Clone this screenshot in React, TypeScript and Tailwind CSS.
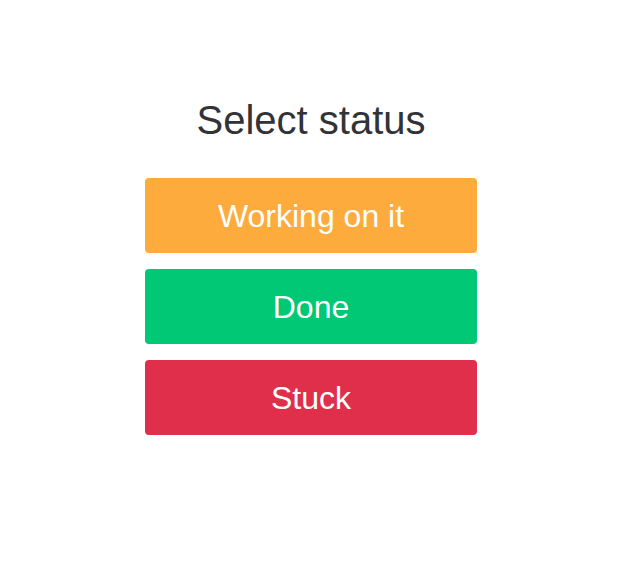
const statuses = [
  { label: 'Working on it', color: 'bg-[#fdab3d]' },
  { label: 'Done', color: 'bg-[#00c875]' },
  { label: 'Stuck', color: 'bg-[#df2f4a]' },
]

export default function App() {
  return (
    <div className="min-h-[583px] bg-white flex justify-center pr-[7px] pt-[96px] font-['Liberation_Sans',Arial,sans-serif]">
      <div className="w-[332px] flex flex-col">
        <h1 className="text-center text-[40px] leading-[48px] text-[#323338]">Select status</h1>
        <div className="mt-[34px] flex flex-col gap-4">
          {statuses.map((s) => (
            <button
              key={s.label}
              className={`${s.color} h-[75px] rounded-[4px] text-white text-[32px] flex items-center justify-center pt-px`}
            >
              {s.label}
            </button>
          ))}
        </div>
      </div>
    </div>
  )
}
